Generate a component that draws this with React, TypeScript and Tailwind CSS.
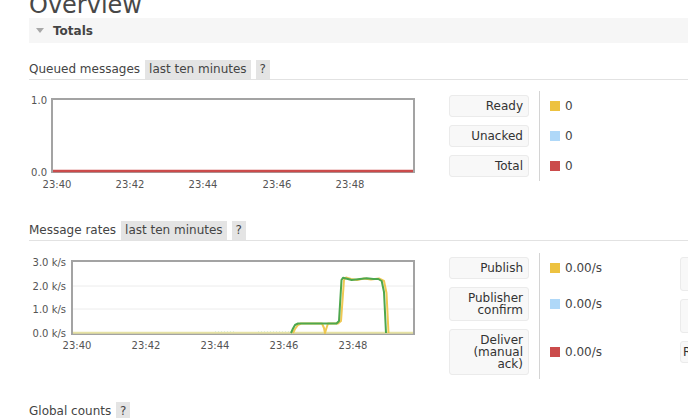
import React from "react";

const YELLOW = "#edc240";
const BLUE = "#afd8f8";
const RED = "#cb4b4b";

function SectionHeader({ title, range = true, line = true }: { title: string; range?: boolean; line?: boolean }) {
  return (
    <div className={`flex h-[20px] items-start text-[12px] leading-[19px] text-[#444] ${line ? "border-b border-[#e2e2e2]" : ""}`}>
      <span>{title}</span>
      {range && <span className="ml-[5px] bg-[#e4e4e4] px-[4px]">last ten minutes</span>}
      <span className="ml-[5px] w-[14px] bg-[#e4e4e4] text-center">?</span>
    </div>
  );
}

function LabelBox({ children, className = "" }: { children: React.ReactNode; className?: string }) {
  return (
    <div
      className={`w-[80px] rounded-[3px] border border-[#ebebeb] bg-[#f8f8f8] py-[4px] pl-[2px] pr-[5px] text-right text-[12px] leading-[12px] text-[#333] ${className}`}
    >
      {children}
    </div>
  );
}

type Row = { label: React.ReactNode; color: string; value: string };

function Legend({ rows }: { rows: Row[] }) {
  return (
    <div className="grid grid-cols-[90px_141px]">
      {rows.map((r, i) => (
        <React.Fragment key={i}>
          <div className="py-[4px] pr-[10px]">
            <LabelBox>{r.label}</LabelBox>
          </div>
          <div className="flex items-center gap-[5px] border-l border-[#d4d4d4] py-[4px] pl-[10px] text-[12px] text-[#444]">
            <span className="h-[10px] w-[10px]" style={{ background: r.color }} />
            <span>{r.value}</span>
          </div>
        </React.Fragment>
      ))}
    </div>
  );
}

function QueuedChart() {
  const xs = [
    { x: 28, t: "23:40" },
    { x: 101, t: "23:42" },
    { x: 174, t: "23:44" },
    { x: 248, t: "23:46" },
    { x: 321, t: "23:48" },
  ];
  return (
    <svg width="391" height="100" className="block shrink-0" fontFamily="DejaVu Sans, sans-serif" fontSize="10" fill="#545454">
      <rect x="23" y="8" width="362" height="73" fill="#fff" stroke="#a3a3a3" strokeWidth="2" />
      <line x1="24" y1="80" x2="384" y2="80" stroke={RED} strokeWidth="2.5" />
      <text x="18" y="12.6" textAnchor="end">1.0</text>
      <text x="18" y="84.6" textAnchor="end">0.0</text>
      {xs.map((l) => (
        <text key={l.t} x={l.x} y="97" textAnchor="middle">{l.t}</text>
      ))}
    </svg>
  );
}

function RatesChart() {
  const xs = [
    { x: 48, t: "23:40" },
    { x: 117, t: "23:42" },
    { x: 186, t: "23:44" },
    { x: 255, t: "23:46" },
    { x: 324, t: "23:48" },
  ];
  const ys = [
    { y: 12.6, t: "3.0 k/s" },
    { y: 36.6, t: "2.0 k/s" },
    { y: 59.6, t: "1.0 k/s" },
    { y: 83.6, t: "0.0 k/s" },
  ];
  const green =
    "M262,80 L264,75.5 L266,72 L269,70.5 L307.5,70.5 L310,68 L312.5,27 L314,24.7 L322.7,27 L331,26 L337.7,25.3 L344.3,26 L349.3,26 L352.7,28 L355,39 L357,80";
  const yellow =
    "M264,80 L266,76 L269,72 L272,70.5 L293,70.5 L295,75 L296,80 L297.5,75 L299,70.5 L309,70.5 L312,68 L315,27 L317,24.5 L322,26 L328,27 L335,25.5 L342,26.5 L350,25.5 L355,28 L357.5,40 L359.5,80";
  return (
    <svg width="391" height="125" className="block shrink-0" fontFamily="DejaVu Sans, sans-serif" fontSize="10" fill="#545454">
      <rect x="43" y="8" width="342" height="73" fill="#fff" stroke="#a3a3a3" strokeWidth="2" />
      <line x1="44" y1="33" x2="384" y2="33" stroke="#ececec" strokeWidth="1" />
      <line x1="44" y1="56" x2="384" y2="56" stroke="#ececec" strokeWidth="1" />
      <line x1="44" y1="79.8" x2="384" y2="79.8" stroke="#e6e2a4" strokeWidth="2" />
      <line x1="186" y1="78.5" x2="206" y2="78.5" stroke="#dcecd6" strokeWidth="1" strokeDasharray="1 2" />
      <line x1="229" y1="78.5" x2="261" y2="78.5" stroke="#dcecd6" strokeWidth="1" strokeDasharray="1 2" />
      <path d={yellow} fill="none" stroke={YELLOW} strokeWidth="2" strokeLinejoin="round" opacity="0.9" />
      <path d={green} fill="none" stroke="#4da74d" strokeWidth="2" strokeLinejoin="round" />
      {ys.map((l) => (
        <text key={l.t} x="37" y={l.y} textAnchor="end">{l.t}</text>
      ))}
      {xs.map((l) => (
        <text key={l.t} x={l.x} y="96" textAnchor="middle">{l.t}</text>
      ))}
    </svg>
  );
}

export default function App() {
  return (
    <div className="h-[418px] w-[688px] overflow-hidden bg-white font-['DejaVu_Sans',sans-serif] text-[#444]">
      <div className="pl-[29px]">
        <h1 className="mt-[-7px] h-[24px] text-[24px] leading-[24px] text-[#484848]">Overview</h1>

        {/* Totals bar */}
        <div className="mt-[1px] flex h-[25px] items-center bg-[#f6f6f6] pl-[7px]">
          <svg width="8" height="5" viewBox="0 0 8 5" className="block">
            <path d="M0 0 L8 0 L4 5 Z" fill="#a8a8a8" />
          </svg>
          <span className="ml-[9px] text-[12px] font-bold text-[#444]">Totals</span>
        </div>

        {/* Queued messages */}
        <div className="mt-[17px]">
          <SectionHeader title="Queued messages" />
        </div>
        <div className="mt-[11px] flex">
          <QueuedChart />
          <div className="ml-[29px]">
            <Legend
              rows={[
                { label: "Ready", color: YELLOW, value: "0" },
                { label: "Unacked", color: BLUE, value: "0" },
                { label: "Total", color: RED, value: "0" },
              ]}
            />
          </div>
        </div>

        {/* Message rates */}
        <div className="mt-[30px]">
          <SectionHeader title="Message rates" />
        </div>
        <div className="mt-[12px] flex">
          <RatesChart />
          <div className="ml-[29px] flex">
            <Legend
              rows={[
                { label: "Publish", color: YELLOW, value: "0.00/s" },
                { label: "Publisher confirm", color: BLUE, value: "0.00/s" },
                { label: "Deliver (manual ack)", color: RED, value: "0.00/s" },
              ]}
            />
            <div className="flex shrink-0 flex-col gap-[8px] pt-[4px]">
              <LabelBox>Deliver (auto ack)</LabelBox>
              <LabelBox>Consumer ack</LabelBox>
              <LabelBox className="whitespace-nowrap text-left">Redelivered</LabelBox>
            </div>
          </div>
        </div>

        {/* Global counts */}
        <div className="mt-[23px]">
          <SectionHeader title="Global counts" range={false} line={false} />
        </div>
      </div>
    </div>
  );
}
